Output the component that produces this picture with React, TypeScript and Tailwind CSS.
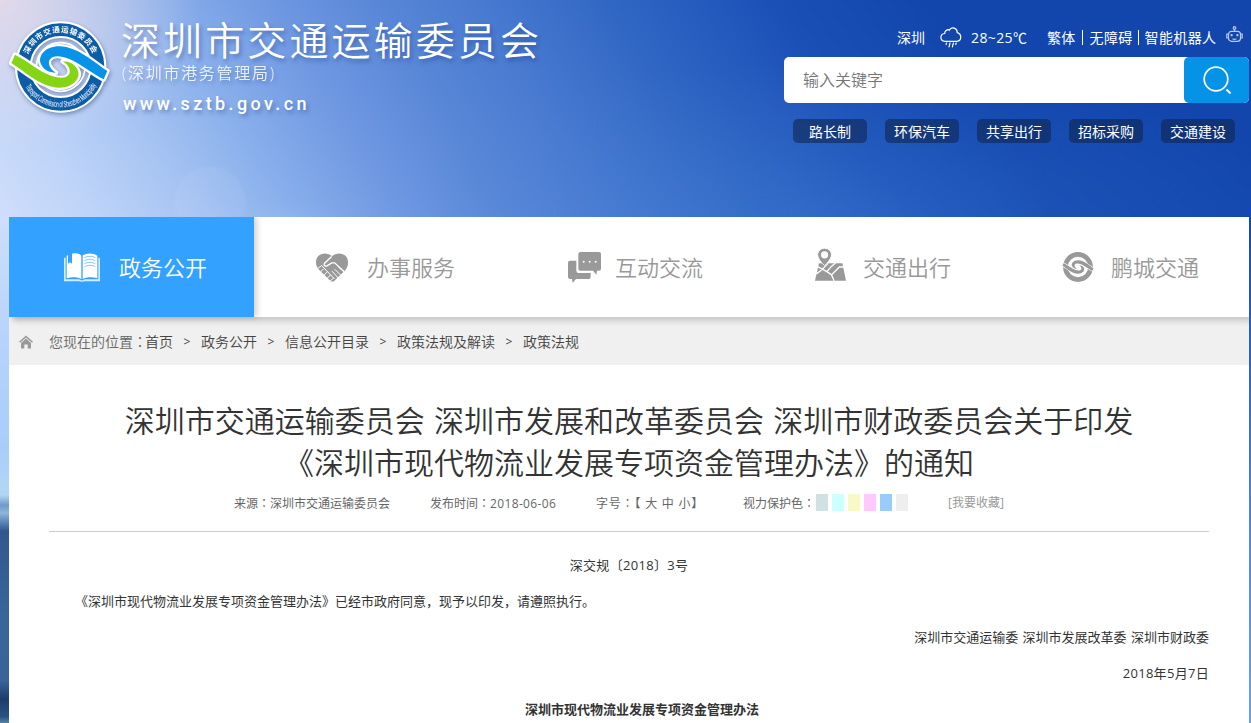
import type { ReactNode } from 'react';

interface NavItem {
    label: string;
    icon: ReactNode;
    offset: string;
}

const BookIcon = () => (
    <svg viewBox="0 0 108 86" className="w-9 h-[29px]">
        <path d="M0 14h5v64h40l9 4 9-4h40V14h5v70H64l-10 2-10-2H0z" fill="#fff" opacity=".8" />
        <path d="M8 8l4-2v26l6-5 6 5V2c10-3 22-1 28 5v71c-8-6-30-7-44-3z" fill="#fff" />
        <path d="M56 7C66-1 88-2 100 8v67c-14-4-36-3-44 3z" fill="#fff" />
        <path d="M61 14c10-6 24-6 33 0M61 23c10-6 24-6 33 0M61 32c10-6 24-6 33 0M61 41c10-6 24-6 33 0" fill="none" stroke="#33a1ff" strokeWidth="2.5" opacity=".75" />
    </svg>
);

const HeartIcon = () => (
    <svg viewBox="0 0 96 86" className="w-8 h-[29px]">
        <path d="M48 9C34-5 0-3 0 28c0 9 4 16 9 22l36 35h8l34-33c6-7 9-15 9-24C96-3 62-5 48 9z" fill="#999" />
        <path d="M47 10L25 31c-3 5 2 9 8 7l14-9h9l28 26" fill="none" stroke="#fff" strokeWidth="4" />
        <path d="M4 47l13-10 38 40M10 60l13-13M20 70l14-14M30 79l14-14M40 86l13-12M56 48l20 20M48 54l19 21M66 40l20 18" fill="none" stroke="#fff" strokeWidth="3" />
    </svg>
);

const ChatIcon = () => (
    <svg viewBox="0 0 99 93" className="w-[33px] h-[31px]">
        <path d="M37 0h56q6 0 6 6v44q0 6-6 6h-6l-2 12-10-12H37q-6 0-6-6V6q0-6 6-6z" fill="#999" />
        <path d="M6 26h19v30q0 7 7 7h36v12q0 6-6 6H24L14 93l-2-12H6q-6 0-6-6V32q0-6 6-6z" fill="#999" />
        <circle cx="47" cy="29" r="3" fill="#fff" />
        <circle cx="65" cy="29" r="3" fill="#fff" />
        <circle cx="83" cy="29" r="3" fill="#fff" />
    </svg>
);

const MapIcon = () => (
    <svg viewBox="0 0 94 99" className="w-[31px] h-[33px] -mt-[5px]">
        <path d="M12 46h71l11 53H0z" fill="#999" />
        <path d="M8 56l28 15M4 78l14-10 22-22M36 71l14 10 24-24h14M36 71l12-14 14-12M50 81l8 18" fill="none" stroke="#fff" strokeWidth="4" />
        <path d="M29 0C17 0 8 9 8 20c0 15 21 33 21 33s21-18 21-33C50 9 41 0 29 0z" fill="#999" stroke="#fff" strokeWidth="3" />
        <circle cx="29" cy="20" r="11" fill="#fff" />
    </svg>
);

// The two interlocking bands share one outline, turned by 180 degrees
const BAND = 'M30 134L19 159C66 190 108 231 162 233C205 234 229 203 218 180C211 163 194 154 173 154C190 164 199 181 192 193C183 208 158 205 135 196C98 181 66 152 30 134Z';

const SwirlIcon = () => (
    <svg viewBox="15 33 296 276" className="w-8 h-[30px]">
        <circle cx="163" cy="171" r="116" fill="none" stroke="#999" strokeWidth="44" />
        <g fill="#999" stroke="#fff" strokeWidth="12" paintOrder="stroke">
            <path d={BAND} />
            <path d={BAND} transform="rotate(180 163 171)" />
        </g>
    </svg>
);

const Emblem = () => (
    <svg viewBox="0 0 330 330" className="w-[110px] h-[110px] drop-shadow-[1px_2px_2px_rgba(30,60,120,0.45)]">
        <defs>
            <path id="arc-top" d="M63 171A104 104 0 0 1 271 171" />
            <path id="arc-bottom" d="M46 171A121 121 0 0 0 288 171" />
        </defs>
        <circle cx="167" cy="171" r="112" fill="none" stroke="#fff" strokeWidth="50" />
        <circle cx="167" cy="171" r="112" fill="none" stroke="#0d5ca8" strokeWidth="38" />
        <circle cx="167" cy="171" r="73" fill="none" stroke="#fff" strokeWidth="5" />
        <text fill="#fff" fontSize="23" fontWeight="700" letterSpacing="2" fontFamily="Noto Sans CJK SC, sans-serif">
            <textPath href="#arc-top" startOffset="50%" textAnchor="middle">深圳市交通运输委员会</textPath>
        </text>
        <text fill="#fff" fontSize="26" fontFamily="Liberation Sans Narrow, Liberation Sans, sans-serif" textLength="262" lengthAdjust="spacingAndGlyphs">
            <textPath href="#arc-bottom" startOffset="16%" textLength="262" lengthAdjust="spacingAndGlyphs">
                Transport Commission of Shenzhen Municipality
            </textPath>
        </text>
        <path d={BAND} fill="#86d416" stroke="#fff" strokeWidth="14" strokeLinejoin="round" paintOrder="stroke" />
        <path d={BAND} transform="rotate(180 163 171)" fill="#0893e8" stroke="#fff" strokeWidth="14" strokeLinejoin="round" paintOrder="stroke" />
    </svg>
);

const CloudIcon = () => (
    <svg viewBox="0 0 22 21" className="w-[22px] h-[21px]" fill="none" stroke="#fff" strokeWidth="1.2" strokeLinecap="round">
        <path d="M5 14.3C-.4 14-.4 7 4.700 6.500C4.600 2.800 8.600 2.200 9.200 3.300C11.500-.8 17.400.8 17.200 5.600C22.300 7 21.600 14 17 14.300Z" />
        <path d="M6.600 16l-.5 1.500M10 16l-1 3.800M13.400 16l-1 3.800M16.200 16l-.5 1.500" />
    </svg>
);

const RobotIcon = () => (
    <svg viewBox="0 0 17 17" className="w-[17px] h-[17px]" fill="none" stroke="#b9c9ea" strokeWidth="1.2">
        <circle cx="8.500" cy="2" r="1.300" />
        <path d="M8.500 3.300v2" />
        <rect x="2.500" y="5.300" width="12" height="10" rx="3" />
        <path d="M2.500 8H.8v4h1.700M14.500 8h1.700v4h-1.700M6.500 12.800q2 1.200 4 0" />
        <path d="M5.600 8v2.300M11.400 8v2.300" strokeWidth="1.900" />
    </svg>
);

const HomeIcon = () => (
    <svg viewBox="0 0 14 14" className="w-3.5 h-3.5">
        <path d="M0 6.800L7 .5l7 6.300-1 .9-6-5.300-6 5.300z" fill="#999" />
        <path d="M2 8l5-4.500L12 8v5.500H8.700V9.500H5.300v4H2z" fill="#999" />
    </svg>
);

// Full-width colon set in the middle of its cell
const Colon = () => <span className="font-['Noto_Sans_CJK_TC',sans-serif]">：</span>;

const tags = ['路长制', '环保汽车', '共享出行', '招标采购', '交通建设'];

const navItems: NavItem[] = [
    { label: '政务公开', icon: <BookIcon />, offset: 'pl-[51px]' },
    { label: '办事服务', icon: <HeartIcon />, offset: 'pl-[53px]' },
    { label: '互动交流', icon: <ChatIcon />, offset: 'pl-[57px]' },
    { label: '交通出行', icon: <MapIcon />, offset: 'pl-[55px]' },
    { label: '鹏城交通', icon: <SwirlIcon />, offset: 'pl-[55px]' },
];

const crumbs = ['首页', '政务公开', '信息公开目录', '政策法规及解读', '政策法规'];

const swatches = ['bg-[#cfe1e0]', 'bg-[#ccffff]', 'bg-[#f9f9c5]', 'bg-[#ffc8ff]', 'bg-[#9bcbfb]', 'bg-[#eeeeee]'];

function Header() {
    return (
        <header className="h-[217px] flex justify-between overflow-hidden bg-[radial-gradient(ellipse_200px_150px_at_0px_0px,rgba(236,220,230,0.8),rgba(236,220,230,0)),radial-gradient(circle_at_210px_202px,rgba(255,255,255,0.05)_34px,rgba(255,255,255,0)_37px),radial-gradient(ellipse_60px_22px_at_288px_222px,rgba(150,200,242,0.25),rgba(150,200,242,0)),radial-gradient(ellipse_480px_170px_at_840px_230px,rgba(70,135,220,0.32),rgba(70,135,220,0)),linear-gradient(58deg,#cfdefb_0px,#bdd3f8_85px,#a5c3f2_170px,#88aeeb_254px,#7099e2_339px,#5b88d8_424px,#487ad0_520px,#2f65c3_640px,#1a50b6_776px,#1246ad_900px)]">
            <div className="flex pl-[5px] pt-[10px]">
                <Emblem />
                <div className="pl-[6px] text-white whitespace-nowrap [text-shadow:2px_3px_4px_rgba(20,50,120,0.4)]">
                    <div className="mt-[7px] text-[39px] leading-[46px] font-[350] tracking-[3.1px]">深圳市交通运输委员会</div>
                    <div className="pl-px text-[16px] leading-5 tracking-[1.7px] opacity-85 font-[350]">(深圳市港务管理局)</div>
                    <div className="mt-[9px] pl-[2px] text-[18px] leading-6 font-medium tracking-[3.4px] font-[Roboto,sans-serif]">www.sztb.gov.cn</div>
                </div>
            </div>
            <div className="w-[467px] pt-[23px] pr-[2px] text-white">
                <div className="flex items-center h-7 pl-[113px] text-[14px] whitespace-nowrap">
                    <span>深圳</span>
                    <span className="ml-[15px]"><CloudIcon /></span>
                    <span className="ml-[9px] w-[57px] tracking-[0.4px]">28~25℃</span>
                    <span className="ml-[19px] tracking-[0.3px]">繁体</span>
                    <span className="ml-[6px] w-px h-[15px] bg-white" />
                    <span className="ml-[7px] tracking-[0.3px]">无障碍</span>
                    <span className="ml-[5px] w-px h-[15px] bg-white" />
                    <span className="ml-[6px] tracking-[0.4px]">智能机器人</span>
                    <span className="ml-[9px] -mt-1.5"><RobotIcon /></span>
                </div>
                <div className="mt-[6px] h-[46px] flex rounded-[5px] bg-white">
                    <input
                        type="text"
                        placeholder="输入关键字"
                        className="flex-1 min-w-0 pl-[19px] text-[16px] text-[#333] placeholder:text-[#757575] font-[350] outline-none"
                    />
                    <button className="w-[65px] flex items-center justify-center rounded-[5px] bg-[#0593e8]">
                        <svg viewBox="0 0 28 28" className="w-7 h-7" fill="none" stroke="#fff" strokeWidth="1.7">
                            <circle cx="13" cy="13" r="11.800" />
                            <path d="M23.500 23.500l4 4" strokeWidth="2" />
                        </svg>
                    </button>
                </div>
                <div className="mt-4 pl-[9px] flex gap-[18px]">
                    {tags.map((tag) => (
                        <a key={tag} className="w-[74px] h-6 flex items-center justify-center rounded-[5px] bg-[#0f2650]/60 pt-px text-[14px] leading-none">
                            {tag}
                        </a>
                    ))}
                </div>
            </div>
        </header>
    );
}

function Nav() {
    return (
        <nav className="relative flex h-[100px] bg-white shadow-[4px_4px_6px_rgba(0,0,0,0.17)]">
            {navItems.map((item, index) => (
                <div key={item.label} className="w-[248px]">
                    <a
                        className={`h-[100px] w-[245px] flex items-center text-[22px] font-[350] ${index === 0
                            ? 'bg-[#33a1ff] text-white shadow-[3px_0_6px_rgba(0,0,0,0.18)]'
                            : 'text-[#999]'
                            }`}
                    >
                        <span className={`w-[110px] shrink-0 ${item.offset}`}>
                            <span className="w-11 flex justify-center">{item.icon}</span>
                        </span>
                        <span className="whitespace-nowrap leading-[30px]">{item.label}</span>
                    </a>
                </div>
            ))}
        </nav>
    );
}

function Breadcrumb() {
    return (
        <div className="h-12 flex items-center pl-[10px] pt-px bg-[#f0f0f0] text-[14px] text-[#444] font-[350] whitespace-nowrap">
            <HomeIcon />
            <span className="ml-4 w-24 text-[#666]">您现在的位置<Colon /></span>
            {crumbs.map((crumb, index) => (
                <span key={crumb} className="flex items-center">
                    {index > 0 && <span className="w-7 text-center text-[12px] font-medium">&gt;</span>}
                    {crumb}
                </span>
            ))}
        </div>
    );
}

function Article() {
    return (
        <main className="h-[358px] px-10 pt-[35px] bg-white text-[#333] overflow-hidden">
            <h1 className="text-center text-[30px] leading-[42px] font-[350] [word-spacing:1.5px] whitespace-nowrap">
                深圳市交通运输委员会 深圳市发展和改革委员会 深圳市财政委员会关于印发
                <br />
                《深圳市现代物流业发展专项资金管理办法》的通知
            </h1>
            <div className="h-12 pl-[185px] pt-[9px] flex border-b border-[#ccc] text-[12px] leading-[20px] text-[#666] whitespace-nowrap">
                <span className="w-[196px]">来源<Colon />深圳市交通运输委员会</span>
                <span className="w-[166px]">发布时间<Colon /><span className="tracking-[0.35px]">2018-06-06</span></span>
                <span className="w-[147px] tracking-[0.8px]">字号<Colon />【 大 中 小】</span>
                <span>视力保护色<Colon /></span>
                <span className="ml-px flex gap-1 pt-px">
                    {swatches.map((color) => (
                        <span key={color} className={`w-3 h-[17px] ${color}`} />
                    ))}
                </span>
                <span className="ml-10 text-[#999]">[我要收藏]</span>
            </div>
            <div className="pt-[15px] text-[13px] leading-9 whitespace-nowrap">
                <p className="text-center tracking-[0.3px]">深交规〔2018〕3号</p>
                <p className="pl-[26px]">《深圳市现代物流业发展专项资金管理办法》已经市政府同意，现予以印发，请遵照执行。</p>
                <p className="text-right [word-spacing:1px]">深圳市交通运输委 深圳市发展改革委 深圳市财政委</p>
                <p className="text-right tracking-[0.3px]">2018年5月7日</p>
                <p className="pl-[26px] text-center font-bold">深圳市现代物流业发展专项资金管理办法</p>
            </div>
        </main>
    );
}

export default function App() {
    return (
        <div className="w-[1251px] h-[723px] overflow-hidden font-['Open_Sans','Noto_Sans_CJK_SC',sans-serif]">
            <Header />
            <div className="grid grid-cols-[9px_1240px_2px]">
                <div className="bg-[linear-gradient(180deg,#cfdefb_0px,#b7d3fd_120px,#a9cdfa_230px,#b4d6f5_278px,#6f9bc8_288px,#8fb5da_296px,#5682b4_306px,#31588e_314px,#39659d_400px,#386499_464px,#1d3c6c_482px,#2a5382_500px,#5c84a6_506px)]" />
                <div className="relative overflow-hidden">
                    <Nav />
                    <Breadcrumb />
                    <Article />
                </div>
                <div className="bg-[linear-gradient(180deg,#1649b0_0px,#2f66c4_160px,#568ad8_330px,#6d9fe3_506px)]" />
            </div>
        </div>
    );
}
